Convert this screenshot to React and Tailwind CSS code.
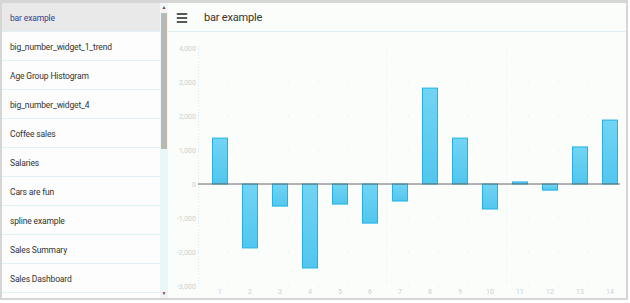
import { Menu } from "lucide-react";

const items = [
  "bar example",
  "big_number_widget_1_trend",
  "Age Group Histogram",
  "big_number_widget_4",
  "Coffee sales",
  "Salaries",
  "Cars are fun",
  "spline example",
  "Sales Summary",
  "Sales Dashboard",
];

const values = [1350, -1880, -650, -2470, -590, -1150, -500, 2820, 1350, -735, 60, -180, 1090, 1880];
const ticks = [4000, 3000, 2000, 1000, 0, -1000, -2000, -3000];

const ZERO = 152;
const SCALE = 34 / 1000;

function BarChart() {
  return (
    <svg width="458" height="266" className="block">
      <defs>
        <linearGradient id="barFill" x1="0" y1="0" x2="0" y2="1">
          <stop offset="0" stopColor="#72d4f3" />
          <stop offset="1" stopColor="#52c6ee" />
        </linearGradient>
      </defs>
      {ticks.map((t) => {
        const y = ZERO - t * SCALE;
        return (
          <g key={t}>
            {t !== 0 && (
              <line x1="30" x2="452" y1={y} y2={y} stroke="#d6eef2" strokeWidth="1" strokeDasharray="1 29" />
            )}
            <text x="28" y={y + 2.5} textAnchor="end" fontSize="7" fill="#c9d2d2" fontFamily="Roboto, sans-serif">
              {t.toLocaleString("en-US")}
            </text>
          </g>
        );
      })}
      <line x1="30.5" x2="30.5" y1="14" y2="254" stroke="#d4eef3" strokeDasharray="1 2" />
      <line x1="218.5" x2="218.5" y1="14" y2="254" stroke="#e2f2f4" strokeDasharray="1 2" />
      <line x1="338.5" x2="338.5" y1="14" y2="254" stroke="#e2f2f4" strokeDasharray="1 2" />
      {values.map((v, i) => {
        const cx = 52 + i * 30;
        const h = Math.abs(v) * SCALE;
        const y = v >= 0 ? ZERO - h : ZERO;
        return (
          <g key={i}>
            <rect x={cx - 7.5} y={y} width="15" height={Math.max(h, 1)} fill="url(#barFill)" stroke="#22b2e4" strokeWidth="1" />
            <text x={cx} y="262" textAnchor="middle" fontSize="7" fill="#c9d2d2" fontFamily="Roboto, sans-serif">
              {i + 1}
            </text>
          </g>
        );
      })}
      <line x1="30" x2="452" y1={ZERO} y2={ZERO} stroke="#666" strokeWidth="1" />
    </svg>
  );
}

export default function App() {
  return (
    <div className="w-[630px] h-[303px] bg-white font-['Roboto',sans-serif]">
      <div className="w-[628px] h-[300px] border-2 border-t-[3px] border-[#d6d6d6] flex overflow-hidden">
        <aside className="w-[158px] flex flex-col overflow-hidden bg-[#fcfdfc]">
          {items.map((label, i) => (
            <div
              key={label}
              className={`h-[29px] shrink-0 flex items-center pl-[8px] pt-[2px] text-[8.5px] tracking-[-0.15px] border-b border-[#dff2f6] ${
                i === 0 ? "bg-[#e8e9e8] text-[#3b3d8f]" : "text-[#333]"
              }`}
            >
              {label}
            </div>
          ))}
        </aside>

        <div className="w-[8px] flex flex-col bg-[#eaf7f9]">
          <div className="h-[10px] flex items-center justify-center bg-[#f4f4f4] text-[5px] text-[#555]">▲</div>
          <div className="h-[136px] mx-[1px] bg-[#b9b9b2]" />
          <div className="flex-1" />
          <div className="h-[8px] flex items-center justify-center bg-[#f4f4f4] text-[5px] text-[#555]">▼</div>
        </div>

        <main className="flex-1 flex flex-col bg-[#fbfdfb]">
          <header className="h-[29px] shrink-0 flex items-center pt-[2px] border-b border-[#dcf0f4]">
            <Menu size={14} strokeWidth={2.5} className="ml-[7px] text-[#222]" />
            <span className="ml-[15px] text-[11px] tracking-[-0.2px] text-[#333]">bar example</span>
          </header>
          <BarChart />
        </main>
      </div>
    </div>
  );
}
